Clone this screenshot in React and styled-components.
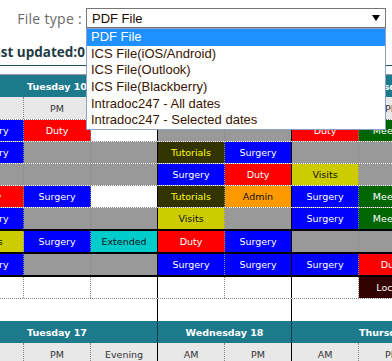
import styled, { createGlobalStyle } from 'styled-components'

const GlobalStyle = createGlobalStyle`
  html, body {
    margin: 0;
    padding: 0;
    background: #fff;
    overflow: hidden;
  }
  body {
    font-family: "DejaVu Sans", Verdana, sans-serif;
  }
`

// cell kinds: label, background, text colour
const kinds = {
  S: { text: 'Surgery', bg: '#0000ff', fg: '#ffffff' },
  D: { text: 'Duty', bg: '#ff0000', fg: '#ffffff' },
  T: { text: 'Tutorials', bg: '#333300', fg: '#ffff00' },
  V: { text: 'Visits', bg: '#cccc00', fg: '#111111' },
  A: { text: 'Admin', bg: '#ff9900', fg: '#111111' },
  E: { text: 'Extended', bg: '#00cccc', fg: '#111111' },
  M: { text: 'Meeting', bg: '#006600', fg: '#ffffff' },
  L: { text: 'Locum', bg: '#330000', fg: '#ffffff' },
  G: { text: '', bg: '#999999', fg: '#000' },
  W: { text: '', bg: '#ffffff', fg: '#000' },
}

const days = [
  { name: 'Tuesday', span: 3 },
  { name: 'Wednesday', span: 2 },
  { name: 'Thursday', span: 3 },
]
const sessions = ['AM', 'PM', 'Evening', 'AM', 'PM', 'AM', 'PM', 'Evening']
const dayEnds = [2, 4, 7]

const rows = [
  { cells: 'SDWGGDMG', edge: '1px dotted #888' },
  { cells: 'SGGTSGGG', edge: '1px dotted #888' },
  { cells: 'GGGSDVGG', edge: '1px dotted #888' },
  { cells: 'DSWTASMG', edge: '1px dotted #888' },
  { cells: 'SGGVGSMG', edge: '2px solid #000' },
  { cells: 'VSEDSGGG', edge: '2px solid #000' },
  { cells: 'SGGSSSDG', edge: '2px solid #000' },
  { cells: 'WWWWWWLW', edge: '1px dotted #888' },
]

const fileTypes = [
  'PDF File',
  'ICS File(iOS/Android)',
  'ICS File(Outlook)',
  'ICS File(Blackberry)',
  'Intradoc247 - All dates',
  'Intradoc247 - Selected dates',
]

function WeekHeader({ dates }) {
  return (
    <>
      <Row $h={22}>
        {days.map((d, i) => (
          <DayCell key={d.name} $span={d.span}>{d.name} {dates[i]}</DayCell>
        ))}
      </Row>
      <Row $h={22} $edge="1px dotted #888">
        {sessions.map((s, i) => (
          <SessionCell key={i} $end={dayEnds.includes(i)}>{s}</SessionCell>
        ))}
      </Row>
    </>
  )
}

export default function App() {
  return (
    <Page>
      <GlobalStyle />
      <TopBar>
        <Label>File type :</Label>
        <SelectWrap>
          <SelectBox>
            <span>PDF File</span>
            <svg width="8" height="6" viewBox="0 0 8 6">
              <path d="M0 0 H8 L4 6 Z" fill="#000" />
            </svg>
          </SelectBox>
          <OptionList>
            {fileTypes.map((f, i) => (
              <Option key={f} $active={i === 0}>{f}</Option>
            ))}
          </OptionList>
        </SelectWrap>
      </TopBar>

      <Updated>Last updated:01/03/2016 09:14</Updated>

      <Schedule>
        <Grid>
          <WeekHeader dates={[10, 11, 12]} />
          {rows.map((r, ri) => (
            <Row key={ri} $h={21} $edge={r.edge}>
              {r.cells.split('').map((c, ci) => (
                <Cell key={ci} $kind={kinds[c]} $end={dayEnds.includes(ci)}>
                  {kinds[c].text}
                </Cell>
              ))}
            </Row>
          ))}
          <Row $h={22}>
            {sessions.map((s, i) => (
              <Cell key={i} $kind={kinds.W} $end={dayEnds.includes(i)} $plain />
            ))}
          </Row>
          <WeekHeader dates={[17, 18, 19]} />
        </Grid>
      </Schedule>
    </Page>
  )
}

const Page = styled.div`
  width: 392px;
  height: 361px;
  overflow: hidden;
`

const TopBar = styled.div`
  display: flex;
  justify-content: flex-end;
  align-items: center;
  padding: 8px 6px 0 0;
  height: 20px;
`

const Label = styled.div`
  font-family: "Open Sans", sans-serif;
  font-size: 14px;
  letter-spacing: 0.3px;
  color: #6a6a6a;
  margin-right: 4px;
`

const SelectWrap = styled.div`
  position: relative;
  width: 300px;
`

const SelectBox = styled.div`
  box-sizing: border-box;
  height: 20px;
  border: 1px solid #767676;
  display: flex;
  align-items: center;
  justify-content: space-between;
  padding: 0 5px 0 5px;
  font-family: "Liberation Sans", Arial, sans-serif;
  font-size: 13px;
  color: #1a0a00;
  background: #fff;
`

const OptionList = styled.div`
  position: absolute;
  top: 100%;
  left: 0;
  right: 0;
  z-index: 10;
  background: #fff;
  border: 1px solid #8c9fc8;
  font-family: "Liberation Sans", Arial, sans-serif;
  font-size: 13px;
`

const Option = styled.div`
  height: 16.67px;
  line-height: 16.67px;
  padding-left: 4px;
  white-space: nowrap;
  background: ${p => (p.$active ? '#1e90ff' : '#fff')};
  color: ${p => (p.$active ? '#fff' : '#3a1400')};
`

const Updated = styled.div`
  margin: 14px 0 0 -15px;
  line-height: 20px;
  padding-bottom: 3px;
  border-bottom: 1px solid #1d5060;
  font-family: "Open Sans", sans-serif;
  font-weight: 700;
  font-size: 13.5px;
  color: #1f3b45;
  white-space: nowrap;
`

const Schedule = styled.div`
  margin-top: 8px;
  border-top: 1px solid #999;
  overflow: hidden;
`

const Grid = styled.div`
  margin-left: -43px;
  width: 536px;
`

const Row = styled.div`
  display: flex;
  height: ${p => p.$h}px;
  border-bottom: ${p => p.$edge || 'none'};
`

const DayCell = styled.div`
  flex: none;
  width: ${p => p.$span * 67 - 1}px;
  border-right: 1px solid #0b3c46;
  background: #1d7a8c;
  color: #fff;
  font-weight: 700;
  font-size: 9.5px;
  display: flex;
  align-items: center;
  justify-content: center;
  white-space: nowrap;
`

const SessionCell = styled.div`
  flex: none;
  width: 66px;
  border-right: 1px ${p => (p.$end ? 'solid #000' : 'dotted #888')};
  background: #e8e8e8;
  color: #333;
  font-size: 9.5px;
  display: flex;
  align-items: center;
  justify-content: center;
`

const Cell = styled.div`
  flex: none;
  width: 66px;
  border-right: 1px ${p => (p.$end ? 'solid #000' : p.$plain ? 'solid transparent' : 'dotted #888')};
  background: ${p => p.$kind.bg};
  color: ${p => p.$kind.fg};
  font-size: 9.5px;
  display: flex;
  align-items: center;
  justify-content: center;
  white-space: nowrap;
`
